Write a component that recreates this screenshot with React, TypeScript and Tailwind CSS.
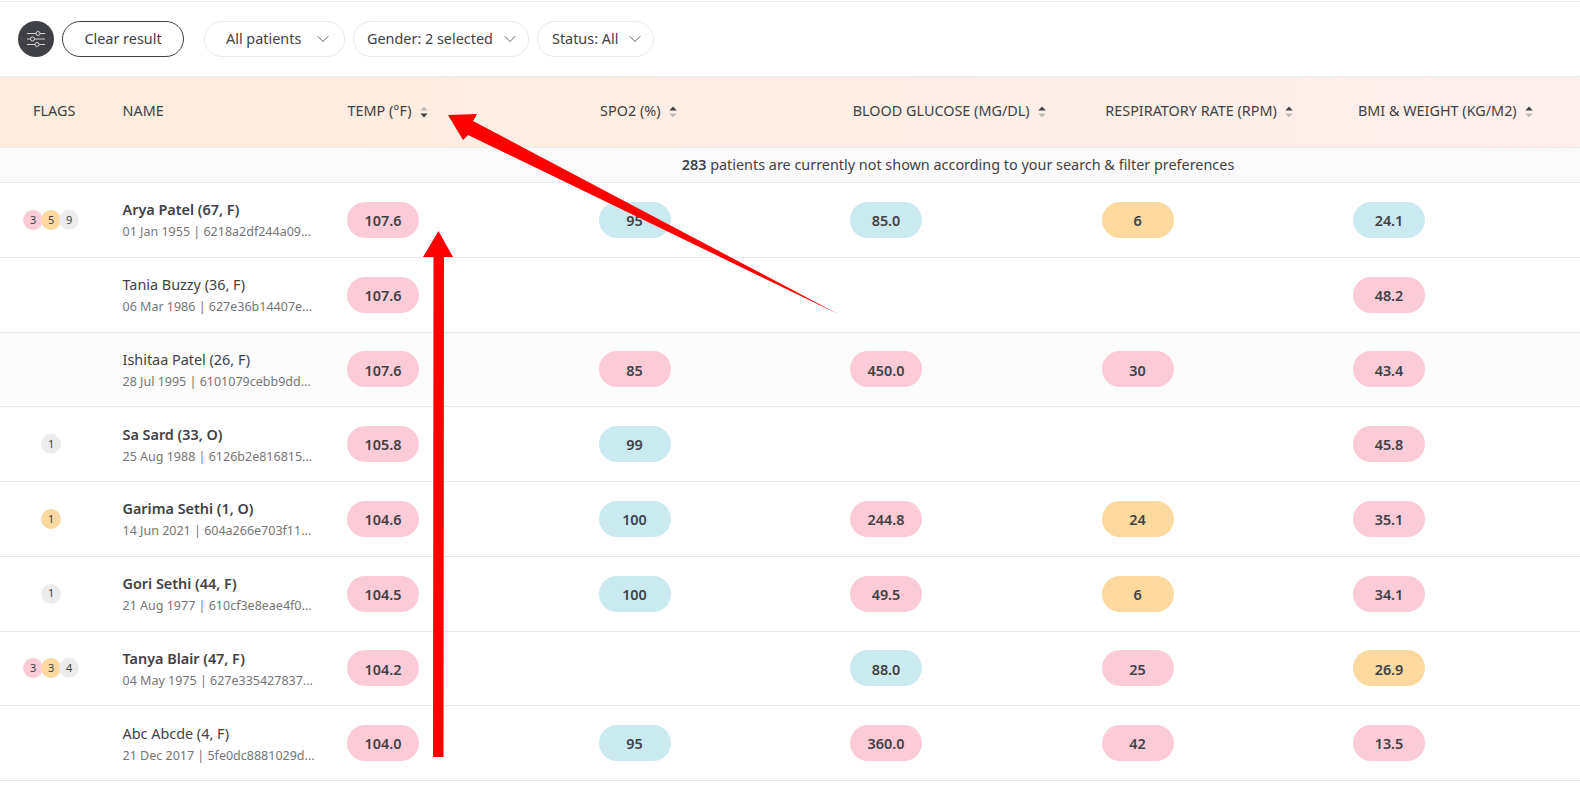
import React from 'react';
import { ChevronDown } from 'lucide-react';

type Tone = 'pink' | 'blue' | 'orange';
type Cell = [string, Tone] | null;

interface Patient {
  name: string;
  sub: string;
  bold?: boolean;
  shaded?: boolean;
  flags?: [number, Tone | 'gray'][];
  cells: Cell[];
}

const toneClass = {
  pink: 'bg-[#fccbd8]',
  blue: 'bg-[#cbeaf0]',
  orange: 'bg-[#fbd99f]',
  gray: 'bg-[#ececec]',
};

const patients: Patient[] = [
  {
    name: 'Arya Patel (67, F)',
    sub: '01 Jan 1955 | 6218a2df244a09...',
    bold: true,
    flags: [[3, 'pink'], [5, 'orange'], [9, 'gray']],
    cells: [['107.6', 'pink'], ['95', 'blue'], ['85.0', 'blue'], ['6', 'orange'], ['24.1', 'blue']],
  },
  {
    name: 'Tania Buzzy (36, F)',
    sub: '06 Mar 1986 | 627e36b14407e...',
    cells: [['107.6', 'pink'], null, null, null, ['48.2', 'pink']],
  },
  {
    name: 'Ishitaa Patel (26, F)',
    sub: '28 Jul 1995 | 6101079cebb9dd...',
    shaded: true,
    cells: [['107.6', 'pink'], ['85', 'pink'], ['450.0', 'pink'], ['30', 'pink'], ['43.4', 'pink']],
  },
  {
    name: 'Sa Sard (33, O)',
    sub: '25 Aug 1988 | 6126b2e816815...',
    bold: true,
    flags: [[1, 'gray']],
    cells: [['105.8', 'pink'], ['99', 'blue'], null, null, ['45.8', 'pink']],
  },
  {
    name: 'Garima Sethi (1, O)',
    sub: '14 Jun 2021 | 604a266e703f11...',
    bold: true,
    flags: [[1, 'orange']],
    cells: [['104.6', 'pink'], ['100', 'blue'], ['244.8', 'pink'], ['24', 'orange'], ['35.1', 'pink']],
  },
  {
    name: 'Gori Sethi (44, F)',
    sub: '21 Aug 1977 | 610cf3e8eae4f0...',
    bold: true,
    flags: [[1, 'gray']],
    cells: [['104.5', 'pink'], ['100', 'blue'], ['49.5', 'pink'], ['6', 'orange'], ['34.1', 'pink']],
  },
  {
    name: 'Tanya Blair (47, F)',
    sub: '04 May 1975 | 627e335427837...',
    bold: true,
    flags: [[3, 'pink'], [3, 'orange'], [4, 'gray']],
    cells: [['104.2', 'pink'], null, ['88.0', 'blue'], ['25', 'pink'], ['26.9', 'orange']],
  },
  {
    name: 'Abc Abcde (4, F)',
    sub: '21 Dec 2017 | 5fe0dc8881029d...',
    cells: [['104.0', 'pink'], ['95', 'blue'], ['360.0', 'pink'], ['42', 'pink'], ['13.5', 'pink']],
  },
];

const columns = ['TEMP (°F)', 'SPO2 (%)', 'BLOOD GLUCOSE (MG/DL)', 'RESPIRATORY RATE (RPM)', 'BMI & WEIGHT (KG/M2)'];

function SortIcon({ active }: { active?: boolean }) {
  return (
    <svg width="8" height="12" viewBox="0 0 8 12" className="ml-[8px] mt-[3px] shrink-0">
      <path d="M4 0.5 L7.7 4.5 H0.3 Z" fill={active ? '#bdbdbd' : '#3f4146'} />
      <path d="M4 11.5 L7.7 7.5 H0.3 Z" fill={active ? '#3f4146' : '#bdbdbd'} />
    </svg>
  );
}

function FilterSelect({ label, className }: { label: string; className: string }) {
  return (
    <div className={`flex h-9 items-center justify-between rounded-full border border-[#ebebeb] text-[14.4px] ${className}`}>
      <span>{label}</span>
      <ChevronDown size={20} strokeWidth={1} />
    </div>
  );
}

function PatientRow({ patient }: { patient: Patient }) {
  return (
    <div className={`flex h-[74.75px] items-center border-b border-[#e8e8e8] ${patient.shaded ? 'bg-[#fcfcfc]' : 'bg-white'}`}>
      <div className="flex w-[122.5px] shrink-0 justify-center pr-[20px]">
        {patient.flags?.map(([count, tone], i) => (
          <span
            key={i}
            className={`flex h-5 w-5 items-center justify-center rounded-full text-[11px] ${i > 0 ? '-ml-[2px]' : ''} ${toneClass[tone]}`}
          >
            {count}
          </span>
        ))}
      </div>
      <div className="w-[224.5px] shrink-0 pt-px">
        <div className={`text-[14.4px] leading-5 ${patient.bold ? 'font-semibold' : ''}`}>{patient.name}</div>
        <div className="mt-[4px] text-[12.5px] leading-4 text-[#757575]">{patient.sub}</div>
      </div>
      {patient.cells.map((cell, i) => (
        <div key={i} className="w-[251.5px] shrink-0">
          {cell && (
            <div className={`flex h-9 w-[72px] items-center justify-center rounded-[18px] pt-[2px] text-[14.4px] font-semibold ${toneClass[cell[1]]}`}>
              {cell[0]}
            </div>
          )}
        </div>
      ))}
    </div>
  );
}

export default function App() {
  return (
    <div className="relative h-[785px] overflow-hidden bg-white font-['Noto_Sans',sans-serif] text-[#3f4146]">
      <div className="mt-px flex h-[75px] items-center border-t border-[#ededed] pl-[18px]">
        <div className="flex h-9 w-9 items-center justify-center rounded-full bg-[#3f4146]">
          <svg width="20" height="18" viewBox="0 0 20 18" fill="none" stroke="#e4e4e4" strokeWidth="0.9">
            <path d="M1 3.5 H10 M14 3.5 H19 M1 9 H4.5 M8.5 9 H19 M1 14.5 H9 M13 14.5 H19" />
            <circle cx="12" cy="3.5" r="2" />
            <circle cx="6.5" cy="9" r="2" />
            <circle cx="11" cy="14.5" r="2" />
          </svg>
        </div>
        <div className="ml-2 flex h-9 w-[122px] items-center justify-center rounded-full border border-[#3f4146] text-[14.4px]">
          Clear result
        </div>
        <FilterSelect label="All patients" className="ml-[20px] w-[141px] pl-[21px] pr-[11px]" />
        <FilterSelect label="Gender: 2 selected" className="ml-2 w-[176px] pl-[13px] pr-[8px]" />
        <FilterSelect label="Status: All" className="ml-2 w-[117px] pl-[14px] pr-[8px]" />
      </div>

      <div className="flex h-[72px] items-center border-y border-[#ececec] bg-linear-to-r from-[#fcecdd] to-[#ffefed] pb-[2px] text-[14.4px]">
        <div className="w-[122.5px] shrink-0 pl-[33px]">FLAGS</div>
        <div className="w-[225px] shrink-0">NAME</div>
        {columns.map((col, i) => (
          <div key={col} className="flex w-[252.6px] shrink-0 items-center">
            <span>{col}</span>
            <SortIcon active={i === 0} />
          </div>
        ))}
      </div>

      <div className="flex h-[35px] items-center justify-center border-b border-[#e8e8e8] bg-[#fafafa] pl-[336px] text-[14.4px]">
        <span>
          <b className="font-semibold">283</b> patients are currently not shown according to your search &amp; filter preferences
        </span>
      </div>

      {patients.map((patient) => (
        <PatientRow key={patient.name} patient={patient} />
      ))}

      {/* red annotation arrows drawn over the screenshot */}
      <svg className="pointer-events-none absolute left-0 top-0" width="1580" height="785">
        <path d="M438.5 231 L453 257 L444 257 L443.5 757 L433 757 L433.5 257 L423 257 Z" fill="#ff0000" />
        <path d="M448 115 L477 114 L473 121 L838 314 L468 135 L463 140 Z" fill="#ff0000" />
      </svg>
    </div>
  );
}
